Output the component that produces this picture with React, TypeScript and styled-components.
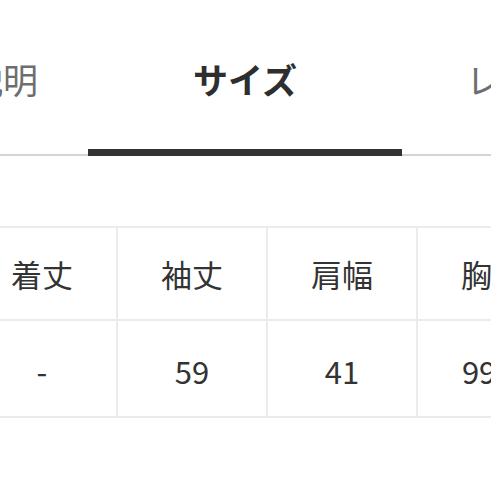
import styled, { createGlobalStyle } from "styled-components";

const GlobalStyle = createGlobalStyle`
    html, body {
        margin: 0;
        padding: 0;
        background: #ffffff;
        overflow: hidden;
    }
    body {
        font-family: "Noto Sans CJK JP", "Noto Sans", sans-serif;
        color: #333333;
    }
`;

const Page = styled.div`
    width: 491px;
    height: 491px;
    overflow: hidden;
`;

const TabBar = styled.div`
    display: flex;
    margin-left: -82px;
    width: max-content;
    min-width: 600px;
    border-bottom: 2px solid #d4d4d4;
`;

const Tab = styled.div<{ $w: number; $active?: boolean }>`
    flex: none;
    width: ${(p) => p.$w}px;
    height: 156px;
    box-sizing: border-box;
    padding-top: 62px;
    display: flex;
    justify-content: center;
    font-size: 35px;
    line-height: 34px;
    white-space: nowrap;
    font-weight: ${(p) => (p.$active ? 700 : 400)};
    color: ${(p) => (p.$active ? "#2e2e2e" : "#6e6e6e")};
    border-bottom: 7px solid ${(p) => (p.$active ? "#333333" : "transparent")};
    margin-bottom: -2px;
`;

const SizeTable = styled.table`
    margin-top: 70px;
    margin-left: -34px;
    width: 602px;
    min-width: 602px;
    border-collapse: collapse;
    table-layout: fixed;
`;

const Cell = styled.td<{ $head?: boolean }>`
    width: 148px;
    height: 91px;
    padding: 0;
    border: 2px solid #ebebeb;
    text-align: center;
    vertical-align: middle;
    font-size: 31px;
    line-height: 1;
    color: #333333;
    white-space: nowrap;
    padding-top: ${(p) => (p.$head ? "0" : "4px")};
`;

const heads = ["着丈", "袖丈", "肩幅", "胸囲"];
const values = ["-", "59", "41", "99.5"];

const App = () => {
    return (
        <Page>
            <GlobalStyle />
            <TabBar>
                <Tab $w={170}>説明</Tab>
                <Tab $w={314} $active>サイズ</Tab>
                <Tab $w={268}>レビュー</Tab>
            </TabBar>
            <SizeTable>
                <tbody>
                    <tr>
                        {heads.map((h) => (
                            <Cell key={h} $head>{h}</Cell>
                        ))}
                    </tr>
                    <tr>
                        {values.map((v, i) => (
                            <Cell key={i}>{v}</Cell>
                        ))}
                    </tr>
                </tbody>
            </SizeTable>
        </Page>
    );
}

export default App;
